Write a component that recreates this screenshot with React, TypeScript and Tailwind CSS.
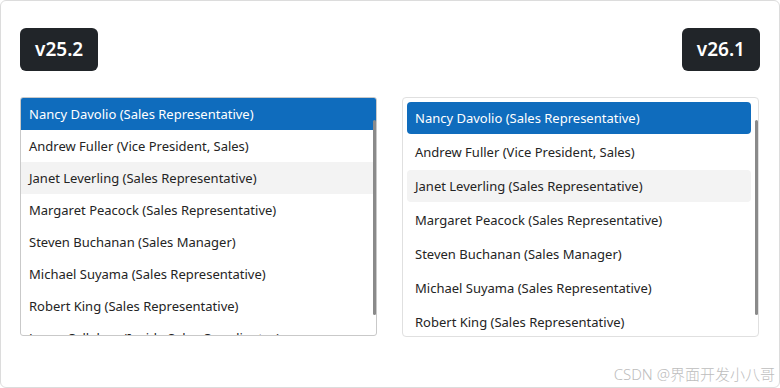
import React from "react";

const EMPLOYEES = [
  "Nancy Davolio (Sales Representative)",
  "Andrew Fuller (Vice President, Sales)",
  "Janet Leverling (Sales Representative)",
  "Margaret Peacock (Sales Representative)",
  "Steven Buchanan (Sales Manager)",
  "Michael Suyama (Sales Representative)",
  "Robert King (Sales Representative)",
  "Laura Callahan (Inside Sales Coordinator)",
  "Anne Dodsworth (Sales Representative)",
];

const font = { fontFamily: "'Noto Sans', 'Noto Sans CJK SC', sans-serif" };

const Badge = ({ label }: { label: string }) => (
  <div className="h-[43px] px-[15px] rounded-md bg-[#212529] text-white text-[19px] font-semibold flex items-center">
    {label}
  </div>
);

const OldList = () => (
  <div className="relative w-[357px] h-[239px] border border-[#c9c9c9] rounded-[3px] overflow-hidden">
    {EMPLOYEES.map((name, i) => (
      <div
        key={name}
        className={`h-8 pl-2 pt-[2px] flex items-center text-[13px] whitespace-nowrap ${
          i === 0 ? "bg-[#0f6cbd] text-white" : i === 2 ? "bg-[#f3f3f3] text-[#242424]" : "text-[#242424]"
        }`}
      >
        {name}
      </div>
    ))}
    {/* scrollbar thumb */}
    <div className="absolute right-0 top-[22px] w-[3px] h-[195px] rounded-full bg-[#8a8a8a]" />
  </div>
);

const NewList = () => (
  <div className="relative w-[357px] h-[240px] border border-[#e0e0e0] rounded-[4px] overflow-hidden p-1">
    <div className="flex flex-col gap-[2px]">
      {EMPLOYEES.map((name, i) => (
        <div
          key={name}
          className={`h-8 px-2 pt-[2px] shrink-0 rounded-[4px] flex items-center text-[13px] whitespace-nowrap mr-[3px] ${
            i === 0 ? "bg-[#0f6cbd] text-white" : i === 2 ? "bg-[#f3f3f3] text-[#242424]" : "text-[#242424]"
          }`}
        >
          {name}
        </div>
      ))}
    </div>
    <div className="absolute right-0 top-[22px] w-[3px] h-[195px] rounded-full bg-[#8a8a8a]" />
  </div>
);

export default function App() {
  return (
    <div className="w-[780px] h-[388px] bg-white" style={font}>
      <div className="relative w-full h-full border border-[#dcdcdc] rounded-md px-[19px] pt-[27px]">
        <div className="flex justify-between">
          <Badge label="v25.2" />
          <Badge label="v26.1" />
        </div>
        <div className="flex justify-between mt-[26px]">
          <OldList />
          <div className="mr-[1px]">
            <NewList />
          </div>
        </div>
        <div className="absolute right-[4px] bottom-[2px] text-[15px] font-light text-[#bdbdbd]">
          CSDN @界面开发小八哥
        </div>
      </div>
    </div>
  );
}
